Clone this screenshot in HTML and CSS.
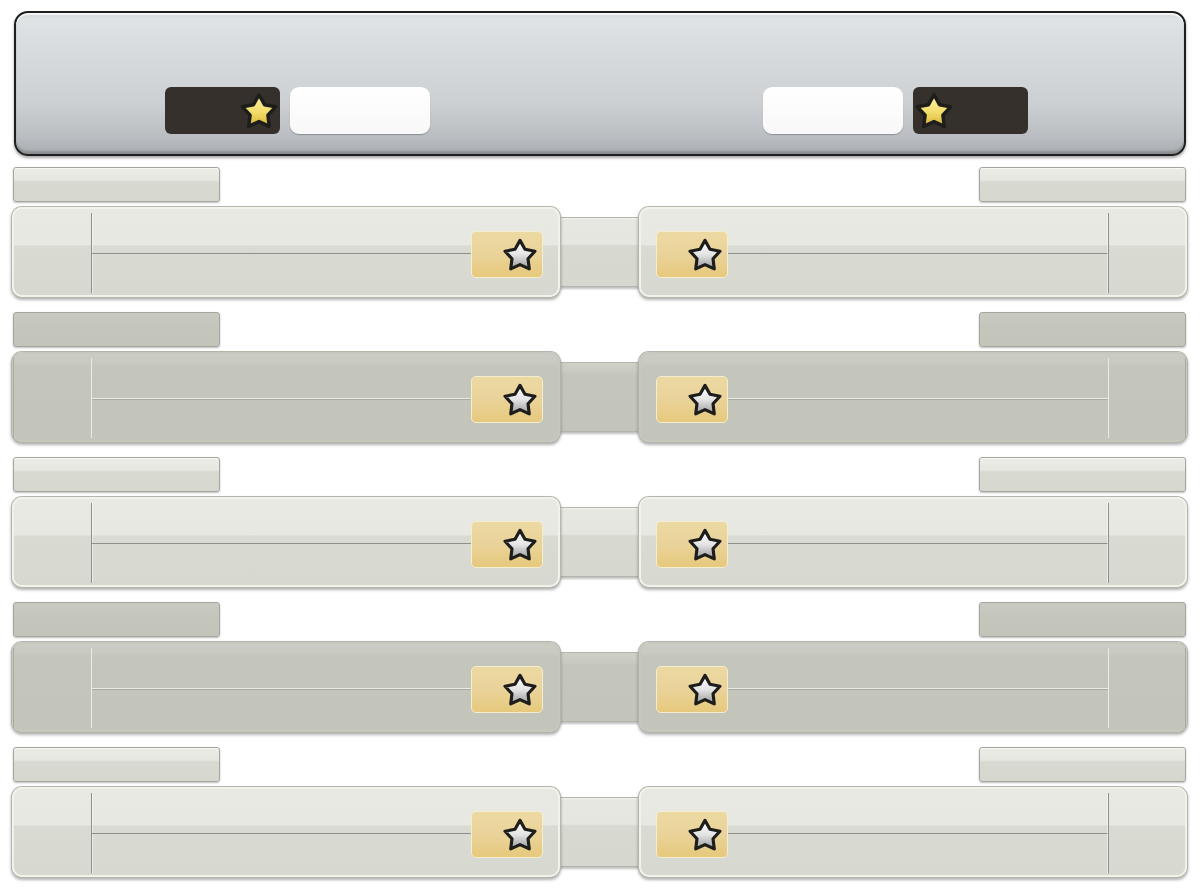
FILE: index.html
```html
<!DOCTYPE html>
<html>
<head>
<meta charset="utf-8">
<link rel="stylesheet" href="styles.css">
</head>
<body>
<svg class="defs" width="0" height="0" aria-hidden="true">
  <defs>
    <linearGradient id="gold" x1="0" y1="0" x2="0" y2="1">
      <stop offset="0" stop-color="#fdf3a8"/>
      <stop offset="0.55" stop-color="#f3dc6a"/>
      <stop offset="1" stop-color="#d6b232"/>
    </linearGradient>
    <linearGradient id="silver" x1="0" y1="0" x2="0" y2="1">
      <stop offset="0" stop-color="#ffffff"/>
      <stop offset="0.5" stop-color="#e4e4e4"/>
      <stop offset="1" stop-color="#9a9a9a"/>
    </linearGradient>
    <path id="starshape" d="M16 3 L20.41 10.93 L29.31 12.67 L23.13 19.32 L24.23 28.33 L16 24.5 L7.77 28.33 L8.87 19.32 L2.69 12.67 L11.59 10.93 Z"/>
  </defs>
</svg>
<div class="page">
  <header class="top">
    <div class="grp">
      <div class="dark dark-l"><svg class="star big" viewBox="0 0 32 32"><use href="#starshape" class="gold"/></svg></div>
      <div class="white"></div>
    </div>
    <div class="grp">
      <div class="white"></div>
      <div class="dark dark-r"><svg class="star big" viewBox="0 0 32 32"><use href="#starshape" class="gold"/></svg></div>
    </div>
  </header>

  <section class="row light">
    <div class="labels"><div class="label"></div><div class="label"></div></div>
    <div class="panels">
      <div class="panel pl"><div class="side"></div><div class="mid"><div class="mid-top"></div></div><div class="badge"><svg class="star" viewBox="0 0 32 32"><use href="#starshape" class="silver"/></svg></div></div>
      <div class="link"></div>
      <div class="panel pr"><div class="badge"><svg class="star" viewBox="0 0 32 32"><use href="#starshape" class="silver"/></svg></div><div class="mid"><div class="mid-top"></div></div><div class="side"></div></div>
    </div>
  </section>

  <section class="row dim">
    <div class="labels"><div class="label"></div><div class="label"></div></div>
    <div class="panels">
      <div class="panel pl"><div class="side"></div><div class="mid"><div class="mid-top"></div></div><div class="badge"><svg class="star" viewBox="0 0 32 32"><use href="#starshape" class="silver"/></svg></div></div>
      <div class="link"></div>
      <div class="panel pr"><div class="badge"><svg class="star" viewBox="0 0 32 32"><use href="#starshape" class="silver"/></svg></div><div class="mid"><div class="mid-top"></div></div><div class="side"></div></div>
    </div>
  </section>

  <section class="row light">
    <div class="labels"><div class="label"></div><div class="label"></div></div>
    <div class="panels">
      <div class="panel pl"><div class="side"></div><div class="mid"><div class="mid-top"></div></div><div class="badge"><svg class="star" viewBox="0 0 32 32"><use href="#starshape" class="silver"/></svg></div></div>
      <div class="link"></div>
      <div class="panel pr"><div class="badge"><svg class="star" viewBox="0 0 32 32"><use href="#starshape" class="silver"/></svg></div><div class="mid"><div class="mid-top"></div></div><div class="side"></div></div>
    </div>
  </section>

  <section class="row dim">
    <div class="labels"><div class="label"></div><div class="label"></div></div>
    <div class="panels">
      <div class="panel pl"><div class="side"></div><div class="mid"><div class="mid-top"></div></div><div class="badge"><svg class="star" viewBox="0 0 32 32"><use href="#starshape" class="silver"/></svg></div></div>
      <div class="link"></div>
      <div class="panel pr"><div class="badge"><svg class="star" viewBox="0 0 32 32"><use href="#starshape" class="silver"/></svg></div><div class="mid"><div class="mid-top"></div></div><div class="side"></div></div>
    </div>
  </section>

  <section class="row light">
    <div class="labels"><div class="label"></div><div class="label"></div></div>
    <div class="panels">
      <div class="panel pl"><div class="side"></div><div class="mid"><div class="mid-top"></div></div><div class="badge"><svg class="star" viewBox="0 0 32 32"><use href="#starshape" class="silver"/></svg></div></div>
      <div class="link"></div>
      <div class="panel pr"><div class="badge"><svg class="star" viewBox="0 0 32 32"><use href="#starshape" class="silver"/></svg></div><div class="mid"><div class="mid-top"></div></div><div class="side"></div></div>
    </div>
  </section>
</div>
</body>
</html>
```

FILE: styles.css
```css
* { box-sizing: border-box; }
html, body { margin: 0; padding: 0; background: #ffffff; }
body { font-family: "Liberation Sans", Arial, sans-serif; width: 1200px; height: 894px; overflow: hidden; }

.defs { position: absolute; width: 0; height: 0; overflow: hidden; }

.page {
  padding: 11px 13px 0 12px;
  display: flex;
  flex-direction: column;
}

/* ---------- header ---------- */
.top {
  margin: 0 1px 11px 2px;
  height: 145px;
  border: 2px solid #1f1f1f;
  border-radius: 14px;
  background: linear-gradient(180deg, #d3d6d9 0px, #e0e3e5 6px, #d8dbde 40px, #ccd0d3 90px, #b9bdc1 125px, #a9adb1 141px);
  box-shadow: inset 0 2px 0 #f4f5f6, inset 0 -3px 2px rgba(0,0,0,0.18), 0 2px 3px rgba(0,0,0,0.35);
  display: flex;
  justify-content: space-between;
  align-items: flex-end;
  padding: 0 156px 20px 149px;
}
.grp { display: flex; gap: 10px; }
.dark {
  width: 115px;
  height: 47px;
  border-radius: 6px;
  background: #35302b;
  display: flex;
  align-items: center;
}
.dark-l { justify-content: flex-end; padding-right: 1px; }
.dark-r { justify-content: flex-start; padding-left: 1px; }
.white {
  width: 140px;
  height: 47px;
  border-radius: 9px;
  background: linear-gradient(180deg, #ffffff, #f8f8f8);
  box-shadow: 0 1px 1px rgba(0,0,0,0.25);
}

.star { width: 36px; height: 36px; display: block; }
.star use { stroke: #1d1d1b; stroke-width: 2.8; stroke-linejoin: round; }
.star .gold { fill: url(#gold); }
.star .silver { fill: url(#silver); }
.star.big { width: 40px; height: 40px; }

/* ---------- rows ---------- */
.row { display: flex; flex-direction: column; margin-bottom: 15px; }
.labels {
  display: flex;
  justify-content: space-between;
  padding: 0 1px;
  margin-bottom: 5px;
}
.label {
  width: 207px;
  height: 35px;
  border-radius: 3px;
  border: 1px solid #a4a59d;
  box-shadow: 0 1px 2px rgba(0,0,0,0.25);
}
.light .label { background: linear-gradient(180deg, #eaece6 0, #e5e7e0 12px, #d8dad1 14px, #d6d8cf 100%); box-shadow: inset 0 1px 0 #f7f8f3, 0 1px 2px rgba(0,0,0,0.25); }
.dim .label { background: linear-gradient(180deg, #c9cac1 0, #c4c5bb 14px, #c3c4ba 100%); }

.panels { display: flex; align-items: center; height: 90px; }
.panel {
  position: relative;
  z-index: 1;
  width: 548px;
  height: 90px;
  border-radius: 10px;
  display: flex;
  align-items: flex-start;
}
.light .panel {
  background: linear-gradient(180deg, #e7e9e2 0, #e6e8e1 36px, #d9dad1 37px, #d7d8cf 100%);
  border: 2px solid #f1f2ea;
  box-shadow: 0 0 0 1px #b5b6ad, 0 2px 3px 1px rgba(0,0,0,0.3);
}
.dim .panel {
  background: linear-gradient(180deg, #cbccc3 0, #c8c9c0 10px, #c4c5bb 12px, #c3c4ba 100%);
  border: 2px solid #c6c7bd;
  box-shadow: 0 0 0 1px #b3b4aa, 0 2px 3px 1px rgba(0,0,0,0.3);
}

.side {
  width: 78px;
  height: 80px;
  margin-top: 4px;
}
.pl .side { border-right: 1px solid #8f908a; box-shadow: 1px 0 0 rgba(255,255,255,0.5); }
.pr .side { border-left: 1px solid #8f908a; box-shadow: -1px 0 0 rgba(255,255,255,0.5); width: 77px; }
.dim .pl .side { border-right-color: #eaeae4; box-shadow: -1px 0 0 #a9aaa0; }
.dim .pr .side { border-left-color: #eaeae4; box-shadow: 1px 0 0 #a9aaa0; }

.mid { flex: 1; height: 86px; }
.mid-top { height: 45px; border-bottom: 1px solid #8f908a; }
.dim .mid-top { border-bottom-color: #eaeae4; box-shadow: 0 1px 0 #a9aaa0; }

.badge {
  width: 72px;
  height: 47px;
  margin-top: 22px;
  border-radius: 5px;
  background: linear-gradient(180deg, #ecd9a2 0, #ead39a 50%, #e6c97c 100%);
  border: 1px solid #f5edcf;
  display: flex;
  align-items: center;
  justify-content: flex-end;
  padding-right: 4px;
}
.pl .badge { margin-right: 15px; }
.pr .badge { margin-left: 15px; }
.badge .star { width: 36px; height: 36px; }

.link {
  flex: 1;
  height: 70px;
  margin: 0 -3px;
  position: relative;
  z-index: 0;
  border-top: 1px solid #b4b5ac;
  border-bottom: 1px solid #b4b5ac;
}
.light .link { background: linear-gradient(180deg, #f1f2ec 0, #e5e7e0 2px, #e4e6df 26px, #d7d9d0 28px, #d6d8cf 100%); box-shadow: 0 2px 2px rgba(0,0,0,0.25); }
.dim .link { background: linear-gradient(180deg, #cfd0c7 0, #c8c9bf 10px, #c4c5bb 12px, #c3c4ba 100%); box-shadow: 0 2px 2px rgba(0,0,0,0.25); }
```
